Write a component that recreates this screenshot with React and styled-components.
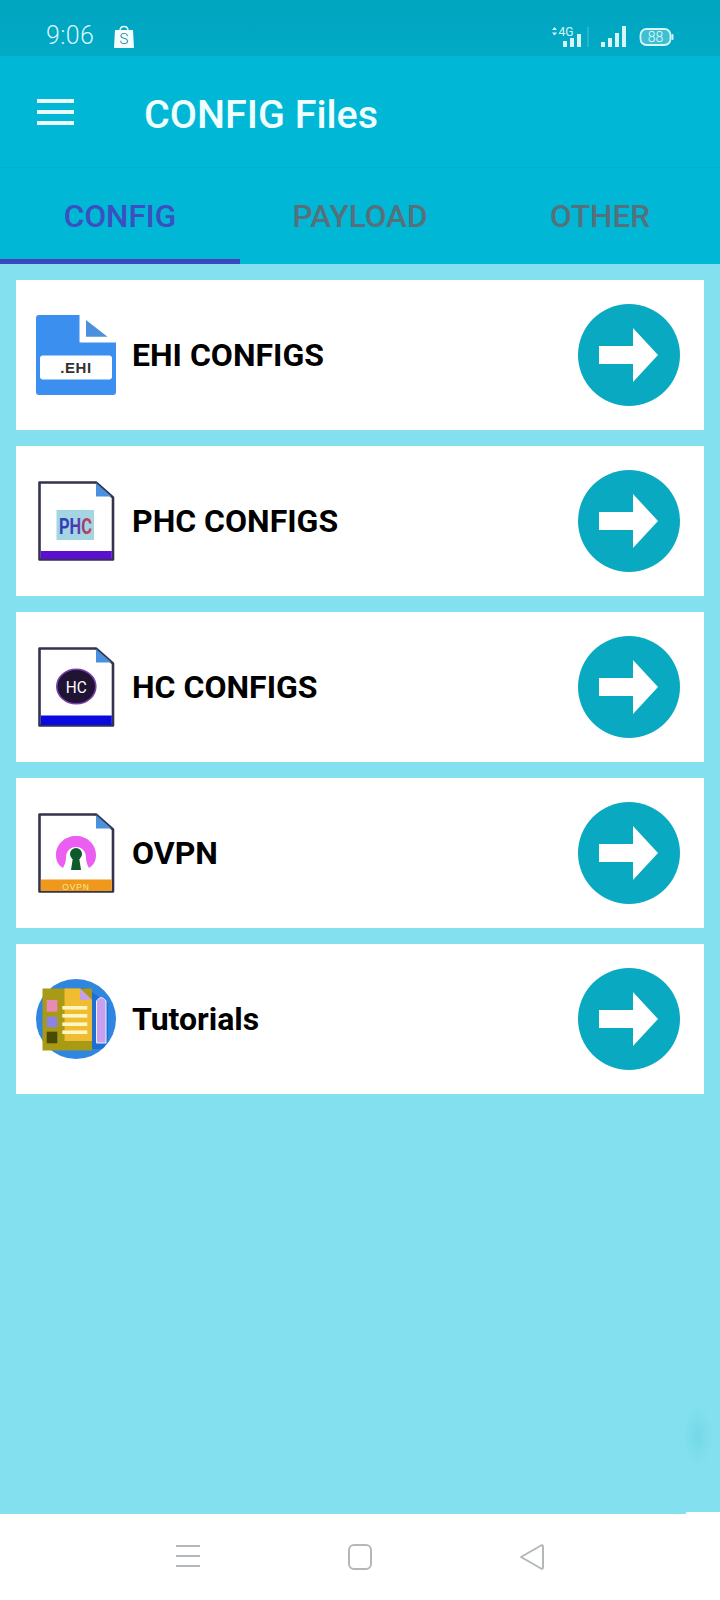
import React from 'react';
import styled, { createGlobalStyle } from 'styled-components';
import { useState } from 'react';

const GlobalStyle = createGlobalStyle`
  html, body {
    margin: 0;
    padding: 0;
    background: #83e0ee;
    font-family: Roboto, "Liberation Sans", sans-serif;
  }
  * {
    box-sizing: border-box;
  }
`;

const Page = styled.div`
  position: relative;
  width: 720px;
  height: 1600px;
  display: flex;
  flex-direction: column;
  overflow: hidden;
`;

const StatusBar = styled.div`
  height: 56px;
  flex: none;
  display: flex;
  align-items: center;
  justify-content: space-between;
  padding: 15px 46px 0 46px;
  background: linear-gradient(#00a5bf, #02aac6);
  color: #d8f6fa;
`;

const StatusLeft = styled.div`
  display: flex;
  align-items: center;
  gap: 20px;
`;

const Clock = styled.span`
  font-size: 25px;
  font-weight: 300;
  line-height: 1;
  letter-spacing: 0.3px;
`;

const Toolbar = styled.header`
  height: 112px;
  flex: none;
  display: flex;
  align-items: center;
  padding-left: 37px;
  gap: 70px;
  background: #00b8d6;
  box-shadow: inset 0 -1px 0 #02aecb;
`;

const Burger = styled.div`
  width: 37px;
  display: flex;
  flex-direction: column;
  gap: 7px;

  span {
    height: 4px;
    background: #eafcff;
  }
`;

const Title = styled.h1`
  margin: 6px 0 0;
  font-size: 39.5px;
  font-weight: 500;
  color: #f0feff;
  line-height: 1;
`;

const Tabs = styled.nav`
  height: 96px;
  flex: none;
  display: flex;
  background: #00b8d6;
`;

const Tab = styled.div`
  width: 240px;
  display: flex;
  align-items: center;
  justify-content: center;
  padding-top: 5px;
  font-size: 31.5px;
  font-weight: 500;
  color: ${(p) => (p.$active ? '#3c4fc0' : '#56707c')};
  border-bottom: 5px solid ${(p) => (p.$active ? '#3c46bd' : 'transparent')};
`;

const List = styled.main`
  flex: 1;
  display: flex;
  flex-direction: column;
  gap: 16px;
  padding: 16px;
  background: #83e0ee;
`;

const Card = styled.div`
  height: 150px;
  display: flex;
  align-items: center;
  padding: 0 24px 0 20px;
  background: #ffffff;
`;

const CardIcon = styled.svg`
  width: 80px;
  height: 80px;
  flex: none;
`;

const CardLabel = styled.span`
  flex: 1;
  margin-left: 16px;
  font-size: 32px;
  font-weight: 700;
  color: #000000;
`;

const ArrowButton = styled.svg`
  width: 102px;
  height: 102px;
  flex: none;
`;

const EdgeHandle = styled.div`
  position: absolute;
  right: 0;
  top: 1405px;
  width: 36px;
  height: 62px;
  background: radial-gradient(ellipse 14px 30px at 14px 50%, rgba(60, 190, 205, 0.22), rgba(130, 224, 238, 0) 100%);
`;

const EdgeNotch = styled.div`
  position: absolute;
  right: 0;
  top: 1512px;
  width: 34px;
  height: 2px;
  background: #ffffff;
`;

const BottomNav = styled.div`
  height: 86px;
  flex: none;
  display: flex;
  align-items: center;
  background: #ffffff;
  padding-left: 175px;
  gap: 146px;
`;

const NavIcon = styled.svg`
  width: 26px;
  height: 28px;
  flex: none;
  fill: none;
  stroke: #b4b8ba;
  stroke-width: 2;
`;

const FileFrame = ({ band, children }) => (
  <CardIcon viewBox="0 0 80 80">
    <path d="M3.5 1.5H60L77 16.5V78.5H3.5Z" fill="#fff" stroke="#33334d" strokeWidth="2.6" strokeLinejoin="round" />
    <path d="M60 2V15.5H75.5Z" fill="#4a90dc" />
    <rect x="4.8" y={band.y} width="71" height={78 - band.y} fill={band.color} />
    {children}
  </CardIcon>
);

const EhiIcon = () => (
  <CardIcon viewBox="0 0 80 80">
    <path d="M3 0H43.5V27.5H80V77A3 3 0 0 1 77 80H3A3 3 0 0 1 0 77V3A3 3 0 0 1 3 0Z" fill="#3b8fef" />
    <path d="M50 5V21.7H71.5Z" fill="#4a90dc" />
    <rect x="4" y="40.5" width="72" height="24" rx="3" fill="#fff" />
    <text x="40" y="58" textAnchor="middle" fontFamily="Liberation Sans" fontWeight="700" fontSize="15" letterSpacing="0.6" fill="#333">
      .EHI
    </text>
  </CardIcon>
);

const PhcIcon = () => (
  <FileFrame band={{ y: 70, color: '#5b0fd0' }}>
    <defs>
      <linearGradient id="phcText" x1="0" x2="1" y1="0" y2="0">
        <stop offset="0" stopColor="#2b3fb5" />
        <stop offset="0.55" stopColor="#4a3ab8" />
        <stop offset="0.85" stopColor="#c0405a" />
      </linearGradient>
    </defs>
    <rect x="20.5" y="29" width="37.5" height="30" fill="#a3d6e2" />
    <text x="39.5" y="53" textAnchor="middle" fontFamily="Roboto" fontWeight="700" fontSize="22" textLength="33" lengthAdjust="spacingAndGlyphs" fill="url(#phcText)">
      PHC
    </text>
  </FileFrame>
);

const HcIcon = () => (
  <FileFrame band={{ y: 68.5, color: '#0a0ae0' }}>
    <ellipse cx="40.3" cy="39.5" rx="19.5" ry="17.3" fill="#1f1433" stroke="#7b3fa8" strokeWidth="1.6" />
    <text x="40.3" y="45.5" textAnchor="middle" fontFamily="Roboto" fontSize="17" textLength="21" lengthAdjust="spacingAndGlyphs" fill="#fff">
      HC
    </text>
  </FileFrame>
);

const OvpnIcon = () => (
  <FileFrame band={{ y: 66.5, color: '#f0981c' }}>
    <path d="M27 55C22 52 20 47.5 20 42C20 31 29 23 40 23C51 23 60 31 60 42C60 47.5 58 52 53 55C51.5 52 50 49 50 45C50 38 46 34 40 34C34 34 30 38 30 45C30 49 28.5 52 27 55Z" fill="#ea5ef2" />
    <circle cx="40" cy="41" r="6" fill="#0f5a2a" />
    <path d="M37 44H43L45 57H35Z" fill="#0f5a2a" />
    <text x="40" y="76.5" textAnchor="middle" fontFamily="Liberation Sans" fontSize="8.5" letterSpacing="0.8" fill="#f8e88e">
      OVPN
    </text>
  </FileFrame>
);

const TutorialsIcon = () => (
  <CardIcon viewBox="0 0 80 80">
    <circle cx="40" cy="40" r="40" fill="#2f86e0" />
    <path d="M44 9H50L72 24V62L66 70H44Z" fill="#1f6fd0" />
    <rect x="6.5" y="9.5" width="49.5" height="62" fill="#a89a14" />
    <path d="M28.5 9.5H44L56 21V62H28.5Z" fill="#f0bc32" />
    <path d="M44 9.5L56 21H44Z" fill="#c9a0e8" />
    <rect x="10.7" y="21" width="10.6" height="11.7" fill="#e88ab8" />
    <rect x="10.7" y="37.7" width="10.6" height="10.6" fill="#8a84e6" />
    <rect x="10.7" y="52.7" width="10.6" height="11.6" fill="#4a4a08" />
    <rect x="26.3" y="27" width="25" height="3.6" fill="#fdf6c0" />
    <rect x="26.3" y="35" width="25" height="3.6" fill="#fdf6c0" />
    <rect x="26.3" y="43.4" width="25" height="3.6" fill="#fdf6c0" />
    <rect x="26.3" y="51.4" width="25" height="3.6" fill="#fdf6c0" />
    <path d="M60.5 22Q65 15 70 22V64H60.5Z" fill="#c9a0f0" stroke="#e4f2ff" strokeWidth="1" />
  </CardIcon>
);

const ShopBag = () => (
  <svg width="20" height="24" viewBox="0 0 20 24">
    <path d="M6 7C6 1 14 1 14 7" fill="none" stroke="#eafcff" strokeWidth="1.5" />
    <path d="M1 6H19L20 24H0Z" fill="#f4feff" />
    <text x="10" y="20" textAnchor="middle" fontFamily="Roboto" fontWeight="300" fontSize="15" fill="#11808f">
      S
    </text>
  </svg>
);

const NetworkStatus = () => (
  <svg width="122" height="24" viewBox="0 0 122 24">
    <g fill="#d8f6fa">
      <path d="M0 6L2.5 3L5 6ZM0 8.5H5L2.5 11.5Z" />
      <text x="6.5" y="12" fontFamily="Roboto" fontSize="12" textLength="15" lengthAdjust="spacingAndGlyphs">
        4G
      </text>
      <rect x="11" y="17" width="4" height="6" />
      <rect x="18" y="14" width="4" height="9" />
      <rect x="25" y="10" width="4" height="13" />
      <rect x="35" y="3" width="2" height="20" opacity="0.18" />
      <rect x="49" y="18" width="4" height="5" />
      <rect x="56" y="14" width="4" height="9" />
      <rect x="63" y="9" width="4" height="14" />
      <rect x="70" y="2" width="4" height="21" />
    </g>
    <rect x="88.5" y="5" width="30" height="16" rx="6" fill="#3cc0d2" stroke="#d8f6fa" strokeWidth="1.8" />
    <rect x="119.5" y="10" width="2" height="6" rx="1" fill="#d8f6fa" />
    <text x="103.5" y="18" textAnchor="middle" fontFamily="Roboto" fontWeight="300" fontSize="14" fill="#eafcff">
      88
    </text>
  </svg>
);

const items = [
  { label: 'EHI CONFIGS', Icon: EhiIcon },
  { label: 'PHC CONFIGS', Icon: PhcIcon },
  { label: 'HC CONFIGS', Icon: HcIcon },
  { label: 'OVPN', Icon: OvpnIcon },
  { label: 'Tutorials', Icon: TutorialsIcon },
];

const tabs = ['CONFIG', 'PAYLOAD', 'OTHER'];

const App = () => {
  const [activeTab] = useState(0);

  return (
    <Page>
      <GlobalStyle />
      <StatusBar>
        <StatusLeft>
          <Clock>9:06</Clock>
          <ShopBag />
        </StatusLeft>
        <NetworkStatus />
      </StatusBar>
      <Toolbar>
        <Burger>
          <span />
          <span />
          <span />
        </Burger>
        <Title>CONFIG Files</Title>
      </Toolbar>
      <Tabs>
        {tabs.map((tab, i) => (
          <Tab key={tab} $active={i === activeTab}>
            {tab}
          </Tab>
        ))}
      </Tabs>
      <List>
        {items.map(({ label, Icon }) => (
          <Card key={label}>
            <Icon />
            <CardLabel>{label}</CardLabel>
            <ArrowButton viewBox="0 0 102 102">
              <circle cx="51" cy="51" r="51" fill="#0aa9c2" />
              <path d="M21 42H55V24L80 51L55 78V60H21Z" fill="#fff" />
            </ArrowButton>
          </Card>
        ))}
      </List>
      <EdgeHandle />
      <EdgeNotch />
      <BottomNav>
        <NavIcon viewBox="0 0 26 28">
          <path d="M1 3H25M1 13H25M1 23H25" />
        </NavIcon>
        <NavIcon viewBox="0 0 26 28">
          <rect x="2" y="2" width="22" height="24" rx="5" />
        </NavIcon>
        <NavIcon viewBox="0 0 26 28">
          <path d="M2 14L22 2.5Q24 1.5 24 4V24Q24 26.5 22 25.5Z" strokeLinejoin="round" />
        </NavIcon>
      </BottomNav>
    </Page>
  );
};

export default App;
